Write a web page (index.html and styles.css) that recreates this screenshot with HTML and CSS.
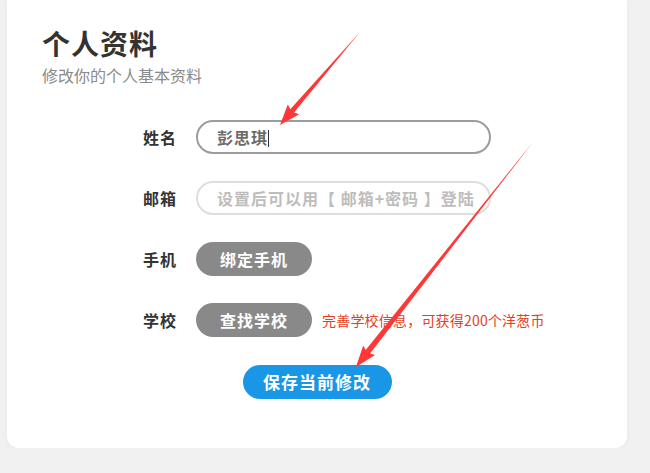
FILE: index.html
```html
<!DOCTYPE html>
<html lang="zh-CN">
<head>
<meta charset="UTF-8">
<meta name="viewport" content="width=device-width, initial-scale=1.0">
<title>个人资料</title>
<link rel="stylesheet" href="styles.css">
</head>
<body>

<div class="card">
    <h1 class="title">个人资料</h1>
    <p class="subtitle">修改你的个人基本资料</p>

    <div class="form">
        <div class="row">
            <label class="label">姓名</label>
            <div class="input active">彭思琪<span class="caret"></span></div>
        </div>
        <div class="row">
            <label class="label">邮箱</label>
            <div class="input placeholder">设置后可以用【 邮箱+密码 】登陆</div>
        </div>
        <div class="row">
            <label class="label">手机</label>
            <div class="btn gray">绑定手机</div>
        </div>
        <div class="row">
            <label class="label">学校</label>
            <div class="btn gray">查找学校</div>
            <span class="tip">完善学校信息，可获得200个洋葱币</span>
        </div>
    </div>

    <div class="actions">
        <div class="btn blue">保存当前修改</div>
    </div>
</div>

<!-- 标注箭头 -->
<svg class="marks" width="650" height="473" viewBox="0 0 650 473">
    <polygon transform="translate(360 32) rotate(130.7)" points="0,0 104,-2.5 102,-7.5 122.7,0 102,7.5 104,2.5" fill="#ff3737"/>
    <polygon transform="translate(533 142) rotate(128.2)" points="0,0 267,-2.8 265,-7.5 286.3,0 265,7.5 267,2.8" fill="#ff3737"/>
</svg>

</body>
</html>
```

FILE: styles.css
```css
body {
    margin: 0;
    background: #f1f1f1;
    font-family: "Noto Sans CJK SC", "Noto Sans", sans-serif;
    color: #333;
    overflow: hidden;
}

.card {
    margin: -10px 0 0 7px;
    width: 620px;
    box-sizing: border-box;
    padding: 39px 35px 49px;
    background: #fff;
    border-radius: 12px;
    box-shadow: 0 1px 6px rgba(0,0,0,0.04);
}

.title {
    margin: 0;
    font-size: 28px;
    line-height: 28px;
    letter-spacing: 1px;
    font-weight: bold;
    color: #333;
}

.subtitle {
    margin: 8px 0 0;
    font-size: 16px;
    line-height: 20px;
    color: #8a8a8a;
}

.form {
    margin-top: 35px;
    padding-left: 101px;
    display: flex;
    flex-direction: column;
    gap: 27px;
}

.row {
    display: flex;
    align-items: center;
    height: 34px;
}

.label {
    width: 53px;
    font-size: 16px;
    letter-spacing: 1px;
    font-weight: bold;
    color: #333;
}

.input {
    width: 295px;
    height: 34px;
    box-sizing: border-box;
    border: 2px solid #9c9c9c;
    border-radius: 17px;
    padding: 0 19px;
    font-size: 16px;
    letter-spacing: 1px;
    line-height: 30px;
    font-weight: bold;
    color: #6b6b6b;
    white-space: nowrap;
    overflow: hidden;
}

.input.placeholder {
    border-color: #dedede;
    color: #bdbdbd;
}

.caret {
    display: inline-block;
    width: 1px;
    height: 17px;
    background: #333;
    vertical-align: -3px;
}

.btn {
    height: 34px;
    border-radius: 17px;
    font-size: 16px;
    letter-spacing: 1px;
    font-weight: bold;
    line-height: 34px;
    color: #fff;
    text-align: center;
}

.btn.gray {
    width: 116px;
    background: #898989;
}

.btn.blue {
    width: 149px;
    background: #1996e6;
    font-size: 17px;
}

.tip {
    margin-left: 10px;
    font-size: 14px;
    letter-spacing: 0.2px;
    color: #e5401c;
}

.actions {
    margin-top: 28px;
    display: flex;
    justify-content: center;
}

.marks {
    position: absolute;
    top: 0;
    left: 0;
    pointer-events: none;
}
```
